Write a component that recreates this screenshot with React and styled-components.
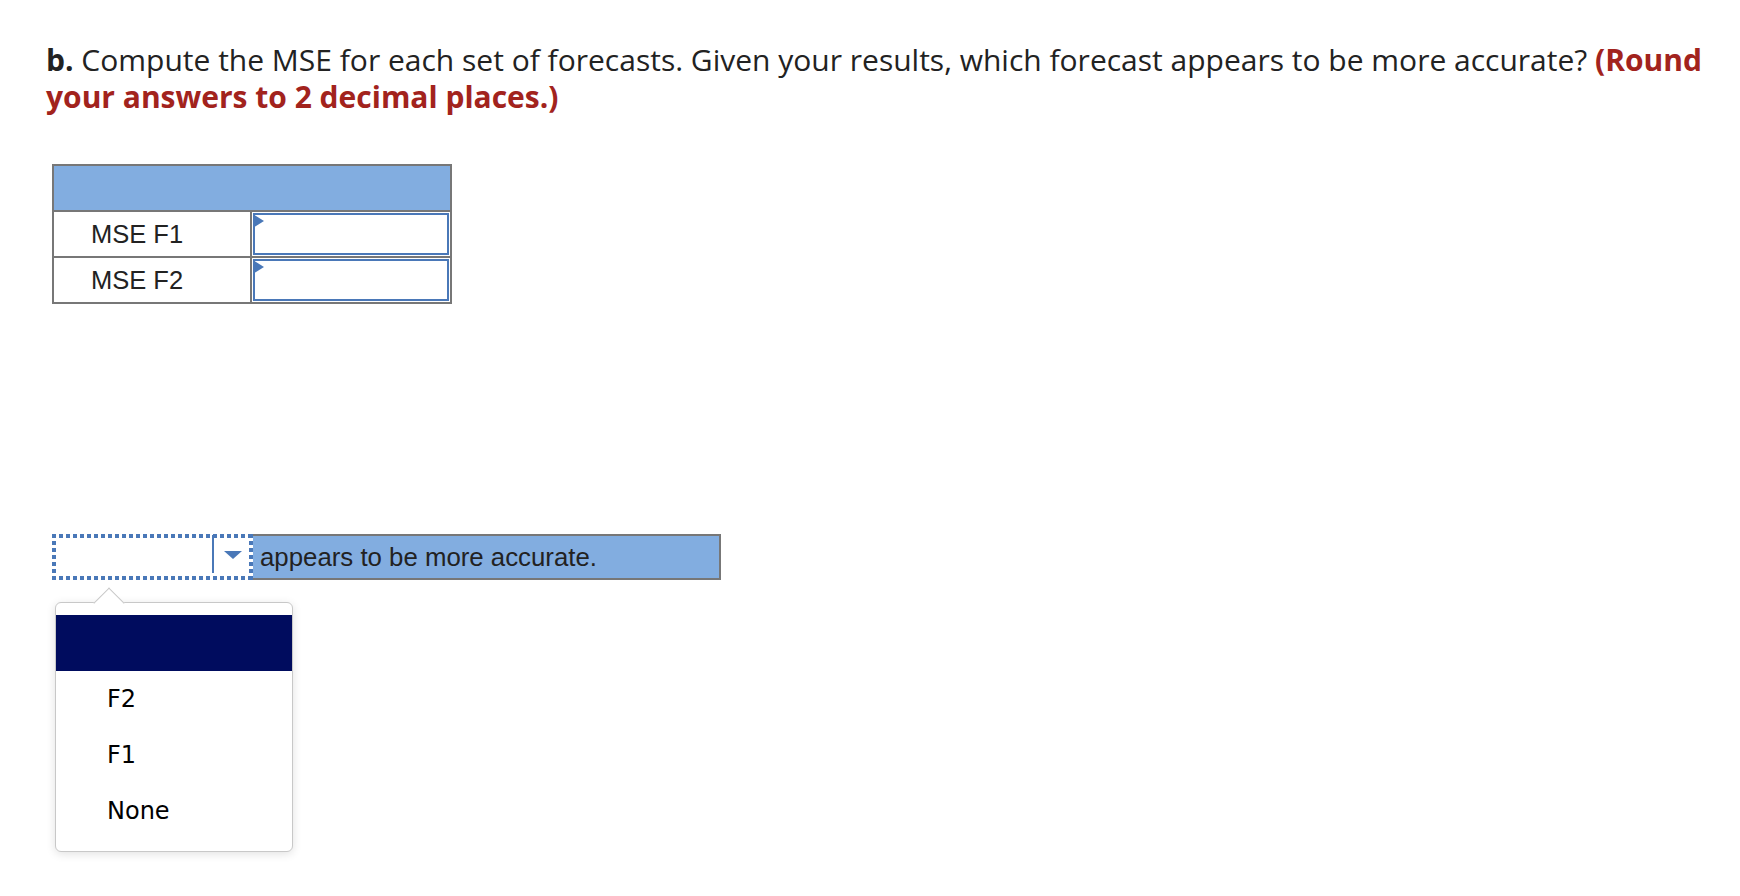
import React from "react";
import styled, { createGlobalStyle } from "styled-components";

const GlobalStyle = createGlobalStyle`
  html, body {
    margin: 0;
    padding: 0;
    background: #ffffff;
  }
  body {
    font-family: "Liberation Sans", Arial, sans-serif;
    color: #222222;
  }
`;

const Page = styled.div`
  padding: 42px 0 0 46px;
  width: 1690px;
  min-height: 854px;
`;

const Prompt = styled.p`
  margin: 0;
  font-family: "Open Sans", Lato, sans-serif;
  font-size: 30px;
  line-height: 36.5px;
  color: #222222;

  b {
    font-weight: 700;
  }
`;

const Hint = styled.span`
  color: #a2231d;
  font-weight: 700;
`;

const GridTable = styled.table`
  margin: 49px 0 0 6px;
  border-collapse: collapse;
  width: 400px;
  border: 2px solid #777777;
`;

const HeadCell = styled.th`
  height: 44px;
  padding: 0;
  background: #82ade0;
  border: 2px solid #777777;
`;

const LabelCell = styled.td`
  width: 198px;
  height: 42px;
  padding: 0 0 0 37px;
  box-sizing: border-box;
  border: 2px solid #777777;
  font-size: 25.5px;
  color: #222222;
  vertical-align: middle;
`;

const InputCell = styled.td`
  position: relative;
  padding: 0;
  border: 2px solid #777777;
  vertical-align: top;
`;

const AnswerBox = styled.div`
  height: 38px;
  margin: 1px;
  border: 2px solid #4a78b8;
  background: #ffffff;
`;

const Flag = styled.span`
  position: absolute;
  left: 1px;
  top: 2px;
  width: 0;
  height: 0;
  border-top: 7px solid transparent;
  border-bottom: 7px solid transparent;
  border-left: 11px solid #4a78b8;
`;

const SentenceRow = styled.div`
  position: relative;
  margin: 230px 0 0 6px;
  width: 669px;
  height: 46px;
  box-sizing: border-box;
  display: flex;
  align-items: center;
  background: #82ade0;
  border: 2px solid #777777;
`;

const dots = "#4a78b8";

const SelectBox = styled.div`
  position: relative;
  align-self: stretch;
  margin: -2px 0 -2px -2px;
  width: 201px;
  flex: none;
  background:
    repeating-linear-gradient(90deg, ${dots} 0 4px, transparent 4px 7px) top left / 100% 4px no-repeat,
    repeating-linear-gradient(90deg, ${dots} 0 4px, transparent 4px 7px) bottom left / 100% 4px no-repeat,
    repeating-linear-gradient(180deg, ${dots} 0 4px, transparent 4px 7px) top left / 4px 100% no-repeat,
    repeating-linear-gradient(180deg, ${dots} 0 4px, transparent 4px 7px) top right / 4px 100% no-repeat,
    #ffffff;
`;

const SelectDivider = styled.span`
  position: absolute;
  left: 160px;
  top: 1px;
  bottom: 7px;
  width: 2px;
  background: #4a78b8;
`;

const Caret = styled.span`
  position: absolute;
  left: 172px;
  top: 17px;
  width: 0;
  height: 0;
  border-left: 9px solid transparent;
  border-right: 9px solid transparent;
  border-top: 8px solid #4a78b8;
`;

const SentenceText = styled.span`
  padding-left: 7px;
  font-size: 25.8px;
  color: #222222;
`;

const Menu = styled.div`
  position: absolute;
  left: 1px;
  top: 66px;
  width: 238px;
  padding: 12px 0;
  box-sizing: border-box;
  background: #ffffff;
  border: 1px solid #c8c8c8;
  border-radius: 6px;
  box-shadow: 0 2px 10px rgba(0, 0, 0, 0.12);
  z-index: 5;

  &::before {
    content: "";
    position: absolute;
    left: 42px;
    top: -11px;
    width: 21px;
    height: 21px;
    background: #ffffff;
    border-top: 1px solid #c8c8c8;
    border-left: 1px solid #c8c8c8;
    transform: rotate(45deg);
  }
`;

const MenuItem = styled.div`
  position: relative;
  height: 56px;
  display: flex;
  align-items: center;
  padding-left: 51px;
  font-family: "DejaVu Sans", Verdana, sans-serif;
  font-size: 24px;
  color: #000000;
  background: ${(p) => (p.$active ? "#000c5e" : "transparent")};
`;

const options = ["", "F2", "F1", "None"];

export default function App() {
  return (
    <>
      <GlobalStyle />
      <Page>
        <Prompt>
          <b>b.</b> Compute the MSE for each set of forecasts. Given your results, which forecast
          appears to be more accurate? <Hint>(Round your answers to 2 decimal places.)</Hint>
        </Prompt>

        <GridTable>
          <thead>
            <tr>
              <HeadCell colSpan={2} />
            </tr>
          </thead>
          <tbody>
            {["MSE F1", "MSE F2"].map((label) => (
              <tr key={label}>
                <LabelCell>{label}</LabelCell>
                <InputCell>
                  <AnswerBox />
                  <Flag />
                </InputCell>
              </tr>
            ))}
          </tbody>
        </GridTable>

        <SentenceRow>
          <SelectBox>
            <SelectDivider />
            <Caret />
          </SelectBox>
          <SentenceText>appears to be more accurate.</SentenceText>
          <Menu>
            {options.map((opt, i) => (
              <MenuItem key={i} $active={i === 0}>
                {opt}
              </MenuItem>
            ))}
          </Menu>
        </SentenceRow>
      </Page>
    </>
  );
}
